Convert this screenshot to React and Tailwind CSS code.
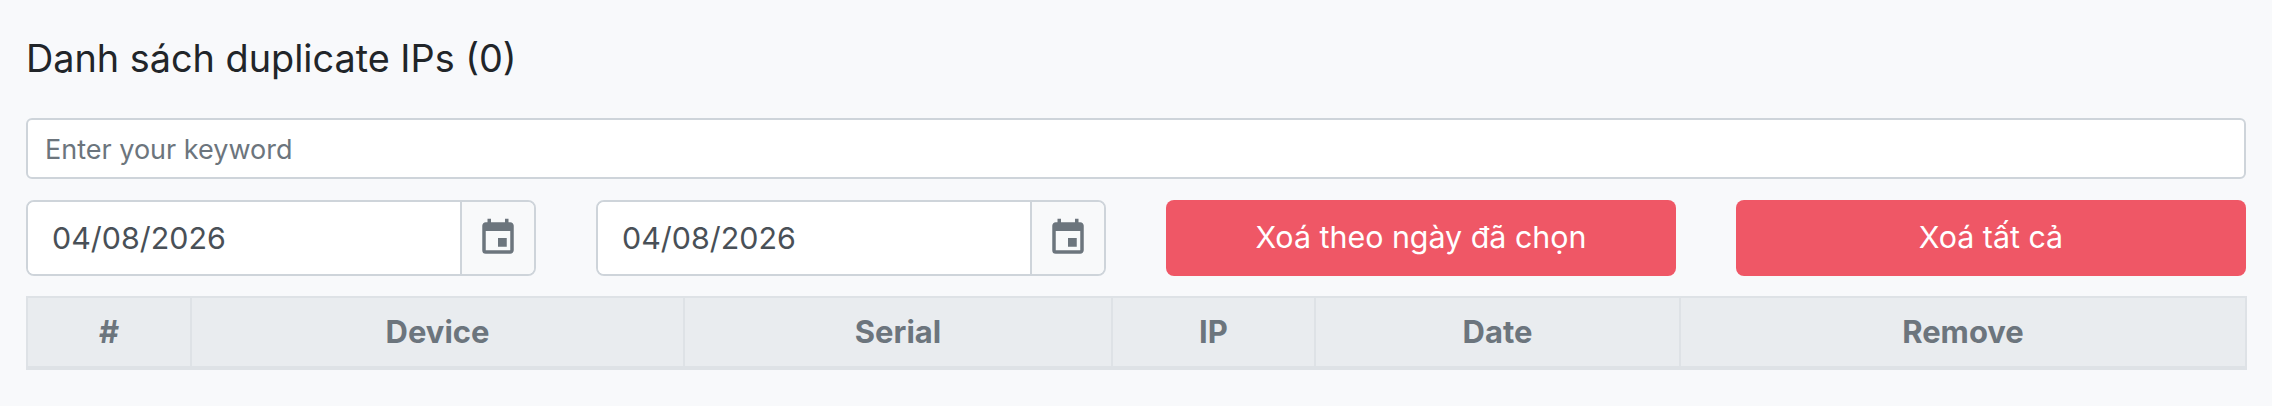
import React from 'react';
import { MdEvent } from 'react-icons/md';

const DateField = () => (
  <div className="flex h-[76px] bg-white border-2 border-[#ced4da] rounded-lg overflow-hidden">
    <input
      readOnly
      value="04/08/2026"
      className="flex-1 min-w-0 px-[24px] pt-[2px] text-[30.4px] text-[#495057] bg-white outline-none"
    />
    <div className="w-[74px] flex items-center justify-center bg-[#f8f9fa] border-l-2 border-[#ced4da]">
      <MdEvent size={42} className="text-[#6c757d]" />
    </div>
  </div>
);

const columns = [
  { label: '#', width: 'w-[164px]' },
  { label: 'Device', width: 'w-[493px]' },
  { label: 'Serial', width: 'w-[428px]' },
  { label: 'IP', width: 'w-[203px]' },
  { label: 'Date', width: 'w-[365px]' },
  { label: 'Remove', width: 'w-[566px]' },
];

export default function App() {
  return (
    <div className="h-[406px] bg-[#f8f9fb] pl-[26px] pt-[35px] pr-[26px] font-['Inter',sans-serif]">
      <h4 className="text-[37.8px] leading-[47px] font-normal text-[#212529]">Danh sách duplicate IPs (0)</h4>

      <input
        placeholder="Enter your keyword"
        className="block w-full h-[61px] mt-[36px] px-[17px] pt-[2px] bg-white border-2 border-[#ced4da] rounded-md text-[27px] text-[#495057] placeholder:text-[#6c757d] outline-none"
      />

      <div className="grid grid-cols-4 gap-x-[60px] mt-[21px]">
        <DateField />
        <DateField />
        <button className="h-[76px] bg-[#ef5766] rounded-lg text-white text-[30.4px]">Xoá theo ngày đã chọn</button>
        <button className="h-[76px] bg-[#ef5766] rounded-lg text-white text-[30.4px]">Xoá tất cả</button>
      </div>

      <table className="w-[calc(100%-1px)] table-fixed mt-[20px] border-collapse">
        <thead>
          <tr className="bg-[#e9ecef]">
            {columns.map((col) => (
              <th
                key={col.label}
                className={`${col.width} h-[71px] border-2 border-b-4 border-[#dee2e6] text-center text-[31px] font-bold text-[#6c757d]`}
              >
                {col.label}
              </th>
            ))}
          </tr>
        </thead>
      </table>
    </div>
  );
}
